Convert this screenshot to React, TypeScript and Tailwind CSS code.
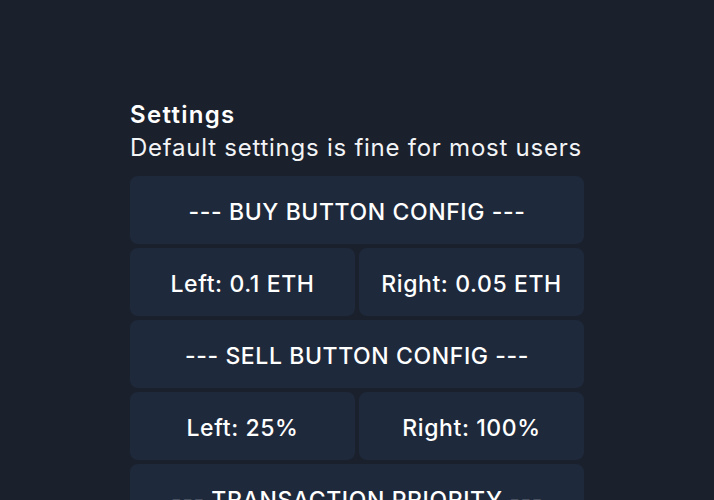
import React from "react";

function Btn({ children }: { children: React.ReactNode }) {
  return (
    <button className="h-[68px] w-full rounded-lg bg-[#1e293b] pt-[4px] text-[23px] font-medium text-white tracking-[0.6px]">
      {children}
    </button>
  );
}

export default function App() {
  return (
    <div className="min-h-screen w-full bg-[#1a202c] text-white" style={{ fontFamily: "Inter, 'Noto Sans', sans-serif" }}>
      <div className="mx-auto w-[454px] pt-[98px]">
        <div className="text-[24px] font-semibold leading-[33px] tracking-[1.3px]">Settings</div>
        <div className="text-[24px] leading-[33px] tracking-[0.75px] text-gray-100 whitespace-nowrap">Default settings is fine for most users</div>
        <div className="mt-[12px] flex flex-col gap-1">
          <Btn>--- BUY BUTTON CONFIG ---</Btn>
          <div className="grid grid-cols-2 gap-1">
            <Btn>Left: 0.1 ETH</Btn>
            <Btn>Right: 0.05 ETH</Btn>
          </div>
          <Btn>--- SELL BUTTON CONFIG ---</Btn>
          <div className="grid grid-cols-2 gap-1">
            <Btn>Left: 25%</Btn>
            <Btn>Right: 100%</Btn>
          </div>
          <Btn>--- TRANSACTION PRIORITY ---</Btn>
        </div>
      </div>
    </div>
  );
}
